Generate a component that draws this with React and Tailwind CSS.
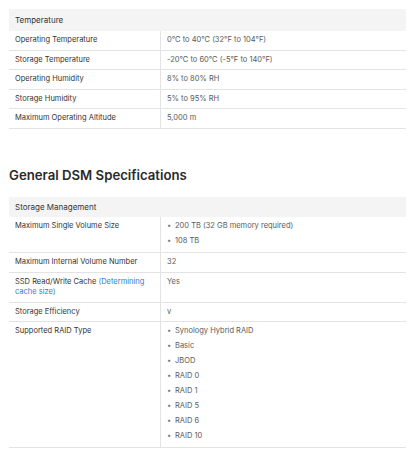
import React from "react";

const font = { fontFamily: "Inter, 'Noto Sans', sans-serif" };

function Row({ label, children, link }) {
  return (
    <div className="grid grid-cols-[151px_1fr] border-b border-[#e3e3e3]">
      <div className="px-[6px] py-[4px] leading-[10.5px] text-[#333]">
        {label}
        {link && <span className="text-[#2b7de1]"> {link}</span>}
      </div>
      <div className="border-l border-[#e3e3e3] px-[6px] py-[4px] leading-[10.5px] text-[#5a5a5a]">
        {children}
      </div>
    </div>
  );
}

function Bullets({ items }) {
  return (
    <ul className="flex flex-col gap-[4.5px] pb-[1.5px]">
      {items.map((it) => (
        <li key={it} className="flex items-center">
          <span className="w-[8px] text-[#777]">•</span>
          <span>{it}</span>
        </li>
      ))}
    </ul>
  );
}

function Header({ children, h }) {
  return (
    <div className={`bg-[#f4f4f4] px-[6px] flex items-center text-[8px] text-[#333] ${h}`}>
      {children}
    </div>
  );
}

export default function App() {
  return (
    <div className="w-[408px] h-[452px] bg-white pl-[9px] pr-[2px] pt-[9px] text-[7.5px]" style={font}>
      <Header h="h-[22px]">Temperature</Header>
      <Row label="Operating Temperature">0°C to 40°C (32°F to 104°F)</Row>
      <Row label="Storage Temperature">-20°C to 60°C (-5°F to 140°F)</Row>
      <Row label="Operating Humidity">8% to 80% RH</Row>
      <Row label="Storage Humidity">5% to 95% RH</Row>
      <Row label="Maximum Operating Altitude">5,000 m</Row>

      <h2 className="mt-[37.5px] mb-[13px] text-[13.2px] font-semibold leading-[18px] text-[#2a2a2a]">
        General DSM Specifications
      </h2>

      <Header h="h-[20px]">Storage Management</Header>
      <Row label="Maximum Single Volume Size">
        <Bullets items={["200 TB (32 GB memory required)", "108 TB"]} />
      </Row>
      <Row label="Maximum Internal Volume Number">32</Row>
      <Row label="SSD Read/Write Cache" link="(Determining cache size)">Yes</Row>
      <Row label="Storage Efficiency">v</Row>
      <Row label="Supported RAID Type">
        <Bullets
          items={[
            "Synology Hybrid RAID",
            "Basic",
            "JBOD",
            "RAID 0",
            "RAID 1",
            "RAID 5",
            "RAID 6",
            "RAID 10",
          ]}
        />
      </Row>
    </div>
  );
}
